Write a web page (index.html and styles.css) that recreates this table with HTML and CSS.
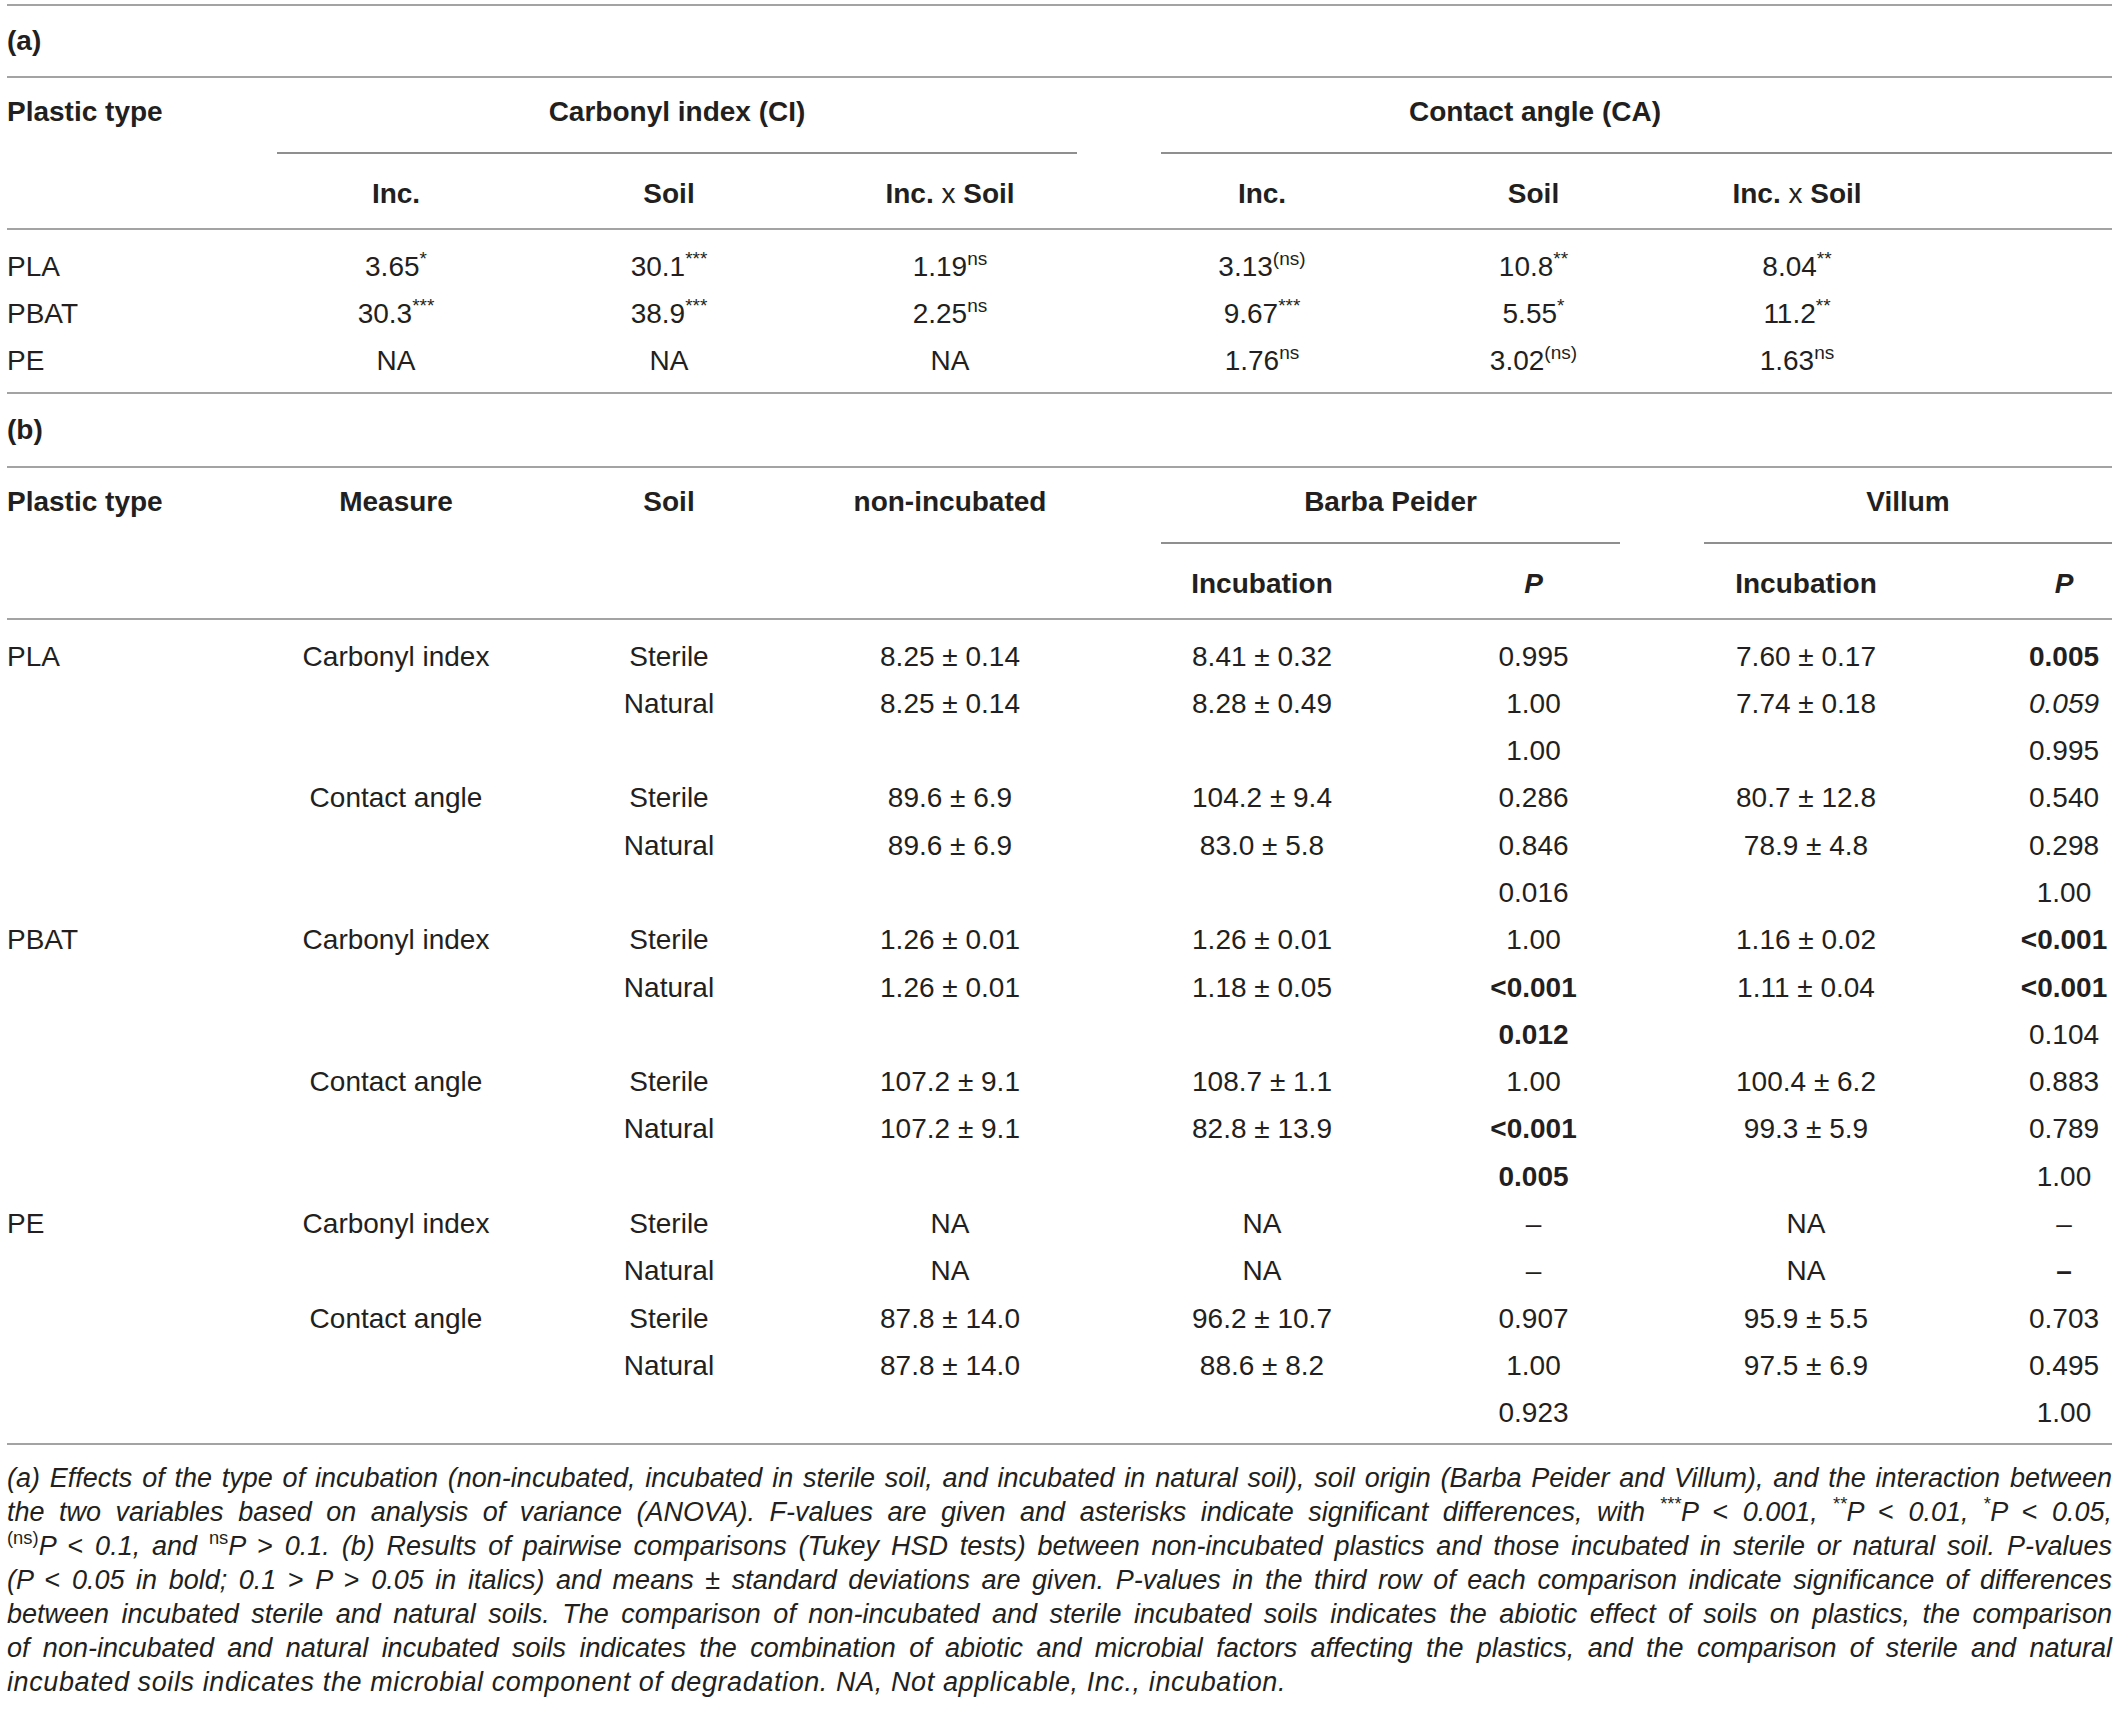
FILE: index.html
```html
<!DOCTYPE html>
<html lang="en">
<head>
<meta charset="utf-8">
<title>Table</title>
<link rel="stylesheet" href="styles.css">
</head>
<body>
<div class="page">
  <table class="tbl tbl-a">
    <colgroup>
      <col class="w1"><col class="w2"><col class="w3"><col class="w4"><col class="w5"><col class="w6"><col class="w7"><col class="w8">
    </colgroup>
    <thead>
      <tr class="sec"><th colspan="8" class="sec-label first-line">(a)</th></tr>
      <tr class="h1">
        <th rowspan="2" class="left stub">Plastic type</th>
        <th colspan="3" class="grp"><div class="grp-title">Carbonyl index (CI)</div><div class="rule"></div></th>
        <th colspan="4" class="grp"><div class="grp-title ca-title">Contact angle (CA)</div><div class="rule inset"></div></th>
      </tr>
      <tr class="h2">
        <th>Inc.</th><th>Soil</th><th>Inc. <span class="times">x</span> Soil</th>
        <th>Inc.</th><th>Soil</th><th class="ca-last">Inc. <span class="times">x</span> Soil</th><th></th>
      </tr>
    </thead>
    <tbody>
      <tr class="first"><td class="left">PLA</td><td>3.65<sup>*</sup></td><td>30.1<sup>***</sup></td><td>1.19<sup>ns</sup></td><td>3.13<sup>(ns)</sup></td><td>10.8<sup>**</sup></td><td class="ca-last">8.04<sup>**</sup></td><td></td></tr>
      <tr><td class="left">PBAT</td><td>30.3<sup>***</sup></td><td>38.9<sup>***</sup></td><td>2.25<sup>ns</sup></td><td>9.67<sup>***</sup></td><td>5.55<sup>*</sup></td><td class="ca-last">11.2<sup>**</sup></td><td></td></tr>
      <tr class="last"><td class="left">PE</td><td>NA</td><td>NA</td><td>NA</td><td>1.76<sup>ns</sup></td><td>3.02<sup>(ns)</sup></td><td class="ca-last">1.63<sup>ns</sup></td><td></td></tr>
    </tbody>
  </table>

  <table class="tbl tbl-b">
    <colgroup>
      <col class="w1"><col class="w2"><col class="w3"><col class="w4"><col class="w5"><col class="w6"><col class="w7"><col class="w8">
    </colgroup>
    <thead>
      <tr class="sec"><th colspan="8" class="sec-label">(b)</th></tr>
      <tr class="h1">
        <th rowspan="2" class="left stub">Plastic type</th>
        <th rowspan="2" class="stub">Measure</th>
        <th rowspan="2" class="stub">Soil</th>
        <th rowspan="2" class="stub">non-incubated</th>
        <th colspan="2" class="grp"><div class="grp-title pad-inset">Barba Peider</div><div class="rule inset"></div></th>
        <th colspan="2" class="grp"><div class="grp-title pad-inset">Villum</div><div class="rule inset"></div></th>
      </tr>
      <tr class="h2">
        <th>Incubation</th><th><i>P</i></th><th>Incubation</th><th class="p-last"><i>P</i></th>
      </tr>
    </thead>
    <tbody>
      <tr class="first"><td class="left">PLA</td><td>Carbonyl index</td><td>Sterile</td><td>8.25 ± 0.14</td><td>8.41 ± 0.32</td><td>0.995</td><td>7.60 ± 0.17</td><td class="p-last"><b>0.005</b></td></tr>
      <tr><td></td><td></td><td>Natural</td><td>8.25 ± 0.14</td><td>8.28 ± 0.49</td><td>1.00</td><td>7.74 ± 0.18</td><td class="p-last"><i>0.059</i></td></tr>
      <tr><td></td><td></td><td></td><td></td><td></td><td>1.00</td><td></td><td class="p-last">0.995</td></tr>
      <tr><td></td><td>Contact angle</td><td>Sterile</td><td>89.6 ± 6.9</td><td>104.2 ± 9.4</td><td>0.286</td><td>80.7 ± 12.8</td><td class="p-last">0.540</td></tr>
      <tr><td></td><td></td><td>Natural</td><td>89.6 ± 6.9</td><td>83.0 ± 5.8</td><td>0.846</td><td>78.9 ± 4.8</td><td class="p-last">0.298</td></tr>
      <tr><td></td><td></td><td></td><td></td><td></td><td>0.016</td><td></td><td class="p-last">1.00</td></tr>
      <tr><td class="left">PBAT</td><td>Carbonyl index</td><td>Sterile</td><td>1.26 ± 0.01</td><td>1.26 ± 0.01</td><td>1.00</td><td>1.16 ± 0.02</td><td class="p-last"><b>&lt;0.001</b></td></tr>
      <tr><td></td><td></td><td>Natural</td><td>1.26 ± 0.01</td><td>1.18 ± 0.05</td><td><b>&lt;0.001</b></td><td>1.11 ± 0.04</td><td class="p-last"><b>&lt;0.001</b></td></tr>
      <tr><td></td><td></td><td></td><td></td><td></td><td><b>0.012</b></td><td></td><td class="p-last">0.104</td></tr>
      <tr><td></td><td>Contact angle</td><td>Sterile</td><td>107.2 ± 9.1</td><td>108.7 ± 1.1</td><td>1.00</td><td>100.4 ± 6.2</td><td class="p-last">0.883</td></tr>
      <tr><td></td><td></td><td>Natural</td><td>107.2 ± 9.1</td><td>82.8 ± 13.9</td><td><b>&lt;0.001</b></td><td>99.3 ± 5.9</td><td class="p-last">0.789</td></tr>
      <tr><td></td><td></td><td></td><td></td><td></td><td><b>0.005</b></td><td></td><td class="p-last">1.00</td></tr>
      <tr><td class="left">PE</td><td>Carbonyl index</td><td>Sterile</td><td>NA</td><td>NA</td><td>–</td><td>NA</td><td class="p-last">–</td></tr>
      <tr><td></td><td></td><td>Natural</td><td>NA</td><td>NA</td><td>–</td><td>NA</td><td class="p-last"><b>–</b></td></tr>
      <tr><td></td><td>Contact angle</td><td>Sterile</td><td>87.8 ± 14.0</td><td>96.2 ± 10.7</td><td>0.907</td><td>95.9 ± 5.5</td><td class="p-last">0.703</td></tr>
      <tr><td></td><td></td><td>Natural</td><td>87.8 ± 14.0</td><td>88.6 ± 8.2</td><td>1.00</td><td>97.5 ± 6.9</td><td class="p-last">0.495</td></tr>
      <tr class="last"><td></td><td></td><td></td><td></td><td></td><td>0.923</td><td></td><td class="p-last">1.00</td></tr>
    </tbody>
  </table>

  <div class="caption">
    <span class="cl">(a) Effects of the type of incubation (non-incubated, incubated in sterile soil, and incubated in natural soil), soil origin (Barba Peider and Villum), and the interaction between</span>
    <span class="cl">the two variables based on analysis of variance (ANOVA). F-values are given and asterisks indicate significant differences, with <sup>***</sup>P <span class="up">&lt;</span> 0.001, <sup>**</sup>P <span class="up">&lt;</span> 0.01, <sup>*</sup>P <span class="up">&lt;</span> 0.05,</span>
    <span class="cl"><sup class="up">(ns)</sup>P <span class="up">&lt;</span> 0.1, and <sup class="up">ns</sup>P <span class="up">&gt;</span> 0.1. (b) Results of pairwise comparisons (Tukey HSD tests) between non-incubated plastics and those incubated in sterile or natural soil. P-values</span>
    <span class="cl">(P <span class="up">&lt;</span> 0.05 in bold; 0.1 <span class="up">&gt;</span> P <span class="up">&gt;</span> 0.05 in italics) and means <span class="up">±</span> standard deviations are given. P-values in the third row of each comparison indicate significance of differences</span>
    <span class="cl">between incubated sterile and natural soils. The comparison of non-incubated and sterile incubated soils indicates the abiotic effect of soils on plastics, the comparison</span>
    <span class="cl">of non-incubated and natural incubated soils indicates the combination of abiotic and microbial factors affecting the plastics, and the comparison of sterile and natural</span>
    <span class="cl cl-end">incubated soils indicates the microbial component of degradation. NA, Not applicable, Inc., incubation.</span>
  </div>
</div>
</body>
</html>
```

FILE: styles.css
```css
html, body {
  margin: 0;
  background: #ffffff;
}

body {
  padding: 4px 6px 0 7px;
  font-family: "Liberation Sans", Arial, sans-serif;
  color: #231f20;
}

.page {
  width: 2105px;
}

.tbl {
  width: 2105px;
  table-layout: fixed;
  border-collapse: separate;
  border-spacing: 0;
  font-size: 28px;
}

.w1 { width: 270px; }
.w2 { width: 238px; }
.w3 { width: 308px; }
.w4 { width: 254px; }
.w5 { width: 370px; }
.w6 { width: 173px; }
.w7 { width: 372px; }
.w8 { width: 120px; }

.tbl th,
.tbl td {
  padding: 0;
  text-align: center;
  vertical-align: top;
  font-weight: normal;
  line-height: 47px;
  white-space: nowrap;
}

.tbl th {
  font-weight: bold;
}

.tbl .left {
  text-align: left;
}

/* section label rows: (a) / (b) */
.sec th {
  line-height: 70px;
  text-align: left;
  border-bottom: 2px solid #a3a3a3;
}

.sec .first-line {
  border-top: 2px solid #a3a3a3;
}

.tbl-b .sec th {
  line-height: 72px;
}

/* header row 1 */
.h1 th {
  line-height: 68px;
}

.h1 .stub {
  border-bottom: 2px solid #a3a3a3;
}

.grp-title {
  line-height: 68px;
  padding-bottom: 6px;
}

.ca-title {
  padding-right: 119px;
}

.pad-inset {
  padding-left: 84px;
}

.rule {
  height: 2px;
  background: #8f8f8f;
}

.rule.inset {
  margin-left: 84px;
}

/* header row 2 */
.h2 th {
  line-height: 68px;
  padding-top: 6px;
  border-bottom: 2px solid #a3a3a3;
}

.times {
  font-weight: normal;
}

/* body rows */
.tbl-b tbody td {
  line-height: 47.3px;
}

.tbl .first td {
  padding-top: 12.5px;
}

.tbl .last td {
  padding-bottom: 8.5px;
  border-bottom: 2px solid #a3a3a3;
}

.tbl-b .last td {
  padding-bottom: 6.5px;
}

.tbl-a .ca-last {
  padding-right: 18px;
}

.tbl-b .p-last {
  padding-left: 24px;
}

.tbl i {
  font-style: italic;
}

sup {
  font-size: 0.68em;
  line-height: 0;
  vertical-align: 0.6em;
}

/* caption */
.caption {
  margin-top: 16px;
  font-size: 27px;
  font-style: italic;
  line-height: 34px;
}

.cl {
  display: block;
  text-align: justify;
  text-align-last: justify;
}

.cl-end {
  text-align-last: left;
  letter-spacing: 0.6px;
}

.up {
  font-style: normal;
}
```
